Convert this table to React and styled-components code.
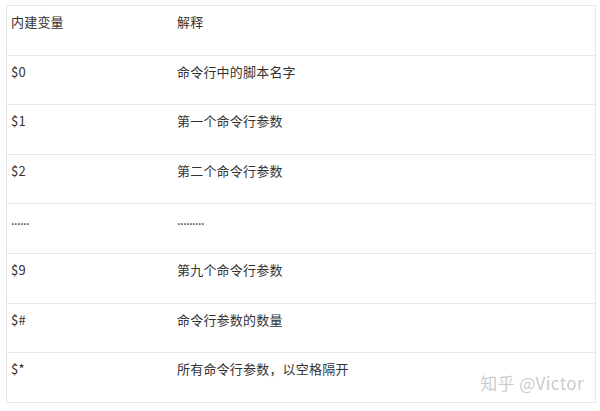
import styled, { createGlobalStyle } from 'styled-components';

const GlobalStyle = createGlobalStyle`
  html, body {
    margin: 0;
    padding: 0;
    background: #fff;
  }
  body {
    font-family: "Microsoft YaHei", "Noto Sans CJK SC", "Noto Sans", sans-serif;
  }
`;

const Page = styled.div`
  padding: 5px 5px 0 6px;
  width: 600px;
  box-sizing: border-box;
`;

const Table = styled.div`
  position: relative;
  width: 590px;
  border: 1px solid #e6e6e6;
  border-bottom: none;
  box-sizing: border-box;
`;

const Row = styled.div`
  display: grid;
  grid-template-columns: 166px 1fr;
  height: 49.6px;
  border-bottom: 1px solid #e8e8e8;
  box-sizing: border-box;
`;

const Cell = styled.div`
  padding: 7px 0 0 4px;
  font-size: 13px;
  line-height: 18px;
  color: #333;
  letter-spacing: ${(p) => (p.$dots ? '-0.6px' : '0.2px')};
`;

const Watermark = styled.div`
  position: absolute;
  right: 11px;
  bottom: 8px;
  font-family: "Noto Sans CJK SC", "Noto Sans", sans-serif;
  font-size: 17px;
  color: rgba(150, 150, 150, 0.5);
  letter-spacing: 0.4px;
`;

const rows = [
  ['内建变量', '解释'],
  ['$0', '命令行中的脚本名字'],
  ['$1', '第一个命令行参数'],
  ['$2', '第二个命令行参数'],
  ['......', '.........'],
  ['$9', '第九个命令行参数'],
  ['$#', '命令行参数的数量'],
  ['$*', '所有命令行参数，以空格隔开'],
];

const App = () => {
  return (
    <>
      <GlobalStyle />
      <Page>
        <Table>
          {rows.map(([a, b], i) => (
            <Row key={i}>
              <Cell $dots={a.startsWith('.')}>{a}</Cell>
              <Cell $dots={b.startsWith('.')}>{b}</Cell>
            </Row>
          ))}
          <Watermark>知乎 @Victor</Watermark>
        </Table>
      </Page>
    </>
  );
};

export default App;
